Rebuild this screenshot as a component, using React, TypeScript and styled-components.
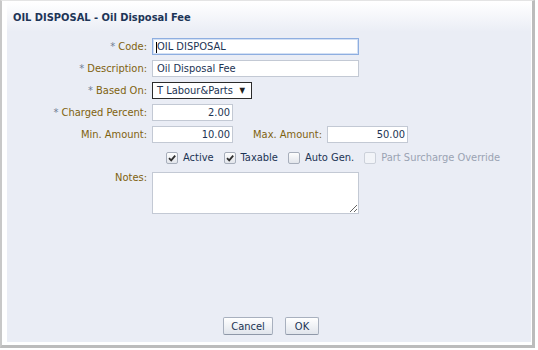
import React from "react";
import styled, { createGlobalStyle } from "styled-components";

const GlobalStyle = createGlobalStyle`
  html, body { margin: 0; padding: 0; background: #ffffff; }
  body {
    font-family: "DejaVu Sans Condensed", "Liberation Sans", sans-serif;
    font-size: 11px;
  }
`;

const Window = styled.div`
  box-sizing: border-box;
  width: 535px;
  height: 348px;
  background: #ffffff;
  border-top: 1px solid #e4e4e4;
  border-left: 2px solid #c8c8c8;
  border-right: 3px solid #bcbcbc;
  border-bottom: 3px solid #bcbcbc;
  padding: 1px 1px 3px 5px;
  display: flex;
`;

const Panel = styled.div`
  flex: 1;
  display: flex;
  flex-direction: column;
  background: linear-gradient(to bottom, #ffffff 0px, #eaedf5 30px, #eaedf5 100%);
`;

const Header = styled.div`
  box-sizing: border-box;
  height: 36px;
  padding: 9px 6px 0;
  font-weight: bold;
  font-size: 11px;
  line-height: 13px;
  color: #1d3557;
`;

const Form = styled.div`
  display: grid;
  grid-template-columns: 140px 1fr;
  grid-template-rows: repeat(5, 17px) 19px 42px;
  column-gap: 5px;
  row-gap: 5px;
`;

const Label = styled.label<{ $top?: boolean }>`
  text-align: right;
  color: #80620f;
  line-height: ${(p) => (p.$top ? "12px" : "17px")};
  white-space: nowrap;
`;

const Star = styled.span`
  color: #6f7d93;
`;

const Cell = styled.div`
  display: flex;
  align-items: center;
`;

const Field = styled.div`
  position: relative;
  display: inline-flex;
`;

const Caret = styled.span`
  position: absolute;
  left: 4px;
  top: 4px;
  width: 1px;
  height: 11px;
  background: #000000;
`;

const TextInput = styled.input<{ $w: number; $right?: boolean; $focused?: boolean }>`
  box-sizing: border-box;
  width: ${(p) => p.$w}px;
  height: 17px;
  margin: 0;
  padding: ${(p) => (p.$right ? "0 2px 0 4px" : "0 2px 0 4px")};
  border: 1px solid ${(p) => (p.$focused ? "#8eaee0" : "#c3c9d4")};
  box-shadow: ${(p) => (p.$focused ? "inset 0 0 0 1px #d3e0f4" : "none")};
  background: #ffffff;
  font: inherit;
  color: #1c3454;
  text-align: ${(p) => (p.$right ? "right" : "left")};
  outline: none;
`;

const SelectBox = styled.div`
  box-sizing: border-box;
  width: 100px;
  height: 17px;
  border: 1px solid #2b2b2b;
  background: #ffffff;
  display: flex;
  align-items: center;
  justify-content: space-between;
  padding: 0 6px 0 4px;
  color: #1c3454;
  white-space: nowrap;
`;

const Arrow = styled.span`
  font-size: 8px;
  color: #222222;
`;

const MaxLabel = styled.span`
  width: 89px;
  margin-right: 5px;
  text-align: right;
  color: #80620f;
  white-space: nowrap;
`;

const CheckRow = styled.div`
  display: flex;
  align-items: center;
  padding-left: 14px;
  gap: 10px;
`;

const CheckItem = styled.label<{ $disabled?: boolean }>`
  display: inline-flex;
  align-items: center;
  gap: 5px;
  color: ${(p) => (p.$disabled ? "#9aa3b3" : "#1c3454")};
  white-space: nowrap;
`;

const Box = styled.span<{ $disabled?: boolean }>`
  box-sizing: border-box;
  width: 12px;
  height: 12px;
  border: 1px solid ${(p) => (p.$disabled ? "#ccd1da" : "#a7aebb")};
  border-radius: 2px;
  background: ${(p) =>
    p.$disabled ? "#f2f4f8" : "linear-gradient(to bottom, #fdfdfd, #e2e5eb)"};
  display: inline-flex;
  align-items: center;
  justify-content: center;
`;

const Notes = styled.textarea`
  box-sizing: border-box;
  width: 207px;
  height: 42px;
  margin: 0;
  padding: 2px 4px;
  border: 1px solid #c3c9d4;
  background: #ffffff;
  font: inherit;
  color: #1c3454;
  outline: none;
  resize: both;
`;

const Footer = styled.div`
  margin-top: auto;
  display: flex;
  justify-content: center;
  gap: 12px;
  padding: 0 0 7px 4px;
`;

const Button = styled.button<{ $w: number }>`
  box-sizing: border-box;
  width: ${(p) => p.$w}px;
  height: 18px;
  margin: 0;
  padding: 0;
  border: 1px solid #a8b0be;
  border-bottom-color: #8f98a8;
  border-radius: 2px;
  background: linear-gradient(to bottom, #ffffff, #e1e5ec);
  font: inherit;
  color: #1c3454;
`;

const Check: React.FC<{ checked?: boolean; disabled?: boolean; label: string }> = ({
  checked,
  disabled,
  label,
}) => (
  <CheckItem $disabled={disabled}>
    <Box $disabled={disabled}>
      {checked && (
        <svg width="10" height="10" viewBox="0 0 10 10">
          <path d="M2 5.2 L4.2 7.4 L8.2 2.6" fill="none" stroke="#2f2f2f" strokeWidth="1.8" />
        </svg>
      )}
    </Box>
    {label}
  </CheckItem>
);

export default function App() {
  return (
    <>
      <GlobalStyle />
      <Window>
        <Panel>
          <Header>OIL DISPOSAL - Oil Disposal Fee</Header>
          <Form>
            <Label>
              <Star>* </Star>Code:
            </Label>
            <Cell>
              <Field>
                <TextInput $w={207} $focused defaultValue="OIL DISPOSAL" />
                <Caret />
              </Field>
            </Cell>

            <Label>
              <Star>* </Star>Description:
            </Label>
            <Cell>
              <TextInput $w={207} defaultValue="Oil Disposal Fee" />
            </Cell>

            <Label>
              <Star>* </Star>Based On:
            </Label>
            <Cell>
              <SelectBox>
                <span>T Labour&amp;Parts</span>
                <Arrow>▼</Arrow>
              </SelectBox>
            </Cell>

            <Label>
              <Star>* </Star>Charged Percent:
            </Label>
            <Cell>
              <TextInput $w={81} $right defaultValue="2.00" />
            </Cell>

            <Label>Min. Amount:</Label>
            <Cell>
              <TextInput $w={81} $right defaultValue="10.00" />
              <MaxLabel>Max. Amount:</MaxLabel>
              <TextInput $w={81} $right defaultValue="50.00" />
            </Cell>

            <span />
            <CheckRow>
              <Check checked label="Active" />
              <Check checked label="Taxable" />
              <Check label="Auto Gen." />
              <Check disabled label="Part Surcharge Override" />
            </CheckRow>

            <Label $top>Notes:</Label>
            <Cell>
              <Notes />
            </Cell>
          </Form>
          <Footer>
            <Button $w={50}>Cancel</Button>
            <Button $w={34}>OK</Button>
          </Footer>
        </Panel>
      </Window>
    </>
  );
}
